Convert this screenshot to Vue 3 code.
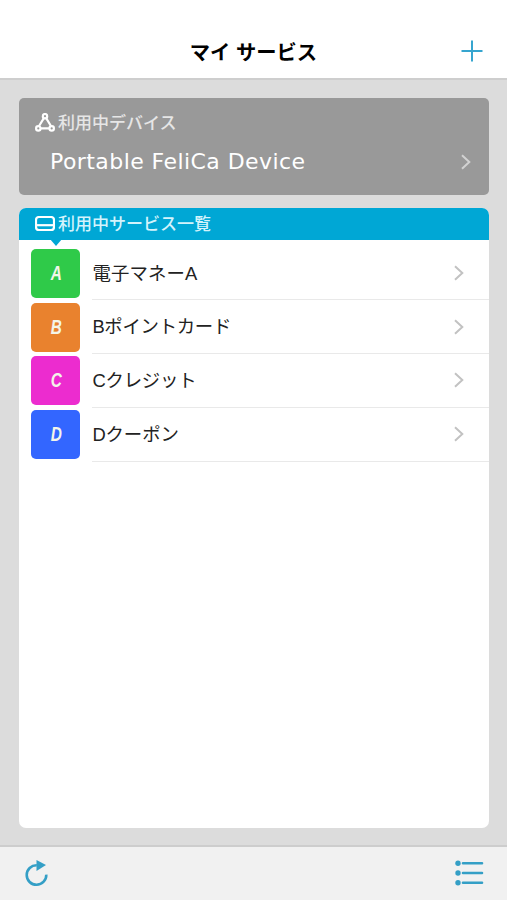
<script setup>
const services = [
  { letter: 'A', name: '電子マネーA', tone: 'green' },
  { letter: 'B', name: 'Bポイントカード', tone: 'orange' },
  { letter: 'C', name: 'Cクレジット', tone: 'pink' },
  { letter: 'D', name: 'Dクーポン', tone: 'blue' },
]
</script>

<template>
  <div class="screen">
    <header class="navbar">
      <h1>マイ サービス</h1>
      <button class="add" aria-label="追加">
        <svg width="22" height="22" viewBox="0 0 22 22"><path d="M11 .5v21M.5 11h21" /></svg>
      </button>
    </header>

    <main>
      <section class="device">
        <h2 class="caption">
          <svg width="20" height="20" viewBox="0 0 20 20">
            <path d="M8.7 5.4 4.2 12.8M11.3 5.4l4.5 7.4M6 15.4h8" />
            <circle cx="10" cy="3.2" r="2.2" />
            <circle cx="3.3" cy="15.4" r="2.2" />
            <circle cx="16.7" cy="15.4" r="2.2" />
          </svg>
          <span>利用中デバイス</span>
        </h2>
        <div class="device-row">
          <span class="device-name">Portable FeliCa Device</span>
          <svg class="chevron" width="10" height="16" viewBox="0 0 10 16"><path d="m1 1.3 7.3 6.7L1 14.7" /></svg>
        </div>
      </section>

      <section class="services">
        <h2 class="caption">
          <svg width="20" height="16" viewBox="0 0 20 16">
            <rect x="1" y="1" width="18" height="13" rx="3" />
            <path d="M1 9.2h18" />
          </svg>
          <span>利用中サービス一覧</span>
        </h2>
        <ul>
          <li v-for="s in services" :key="s.letter" :class="s.tone">
            <span class="tile"><b>{{ s.letter }}</b></span>
            <div class="entry">
              <span class="name">{{ s.name }}</span>
              <svg class="chevron" width="10" height="16" viewBox="0 0 10 16"><path d="m1 1.3 7.3 6.7L1 14.7" /></svg>
            </div>
          </li>
        </ul>
      </section>
    </main>

    <footer>
      <button aria-label="更新">
        <svg width="24" height="28" viewBox="0 0 24 28">
          <path class="arc" d="M21.3 15.6A9.8 9.8 0 1 1 11.8 6.2" />
          <path class="head" d="M11.5 1 21 6.1l-9.5 5.8z" />
        </svg>
      </button>
      <button aria-label="一覧">
        <svg width="29" height="26" viewBox="0 0 29 26">
          <circle class="head" cx="3" cy="3.2" r="2.7" />
          <circle class="head" cx="3" cy="13" r="2.7" />
          <circle class="head" cx="3" cy="22.8" r="2.7" />
          <path class="line" d="M8 3.2h19M8 13h19M8 22.8h19" />
        </svg>
      </button>
    </footer>
  </div>
</template>

<style>
body {
  margin: 0;
}
</style>

<style scoped>
.screen {
  display: flex;
  flex-direction: column;
  height: 900px;
  background: #dcdcdc;
  font-family: "Liberation Sans", "Noto Sans CJK JP", sans-serif;
  color: #222;
}
svg {
  display: block;
  flex: none;
  fill: none;
}
button {
  padding: 0;
  border: 0;
  background: none;
}
h1,
h2,
ul {
  margin: 0;
  padding: 0;
}
.navbar {
  box-sizing: border-box;
  display: grid;
  grid-template-columns: 1fr auto 1fr;
  align-items: center;
  height: 80px;
  padding: 24px 24px 0;
  border-bottom: 2px solid #cecece;
  background: #fff;
}
h1 {
  grid-column: 2;
  padding-top: 4px;
  font-size: 20.3px;
  line-height: 28px;
  color: #000;
}
.add {
  justify-self: end;
}
.add svg {
  stroke: #36a5cf;
  stroke-width: 2;
}
main {
  flex: 1;
  display: flex;
  flex-direction: column;
  gap: 12.5px;
  padding: 17.5px 18px 17px 19px;
}
.caption {
  display: flex;
  align-items: center;
  gap: 3px;
  font-size: 17px;
  line-height: 24px;
  font-weight: 500;
}
.caption span {
  padding-top: 2px;
}
.caption svg {
  stroke: #fff;
  stroke-width: 2.2;
}
.device {
  box-sizing: border-box;
  height: 97.5px;
  padding: 12px 18px 0 16px;
  border-radius: 5px;
  background: #999;
}
.device .caption {
  color: #e6e6e6;
}
.device-row {
  display: flex;
  align-items: center;
  justify-content: space-between;
  padding: 11px 0 0 15px;
}
.device-name {
  font: 22px/30px "DejaVu Sans", sans-serif;
  letter-spacing: 0.43px;
  color: #fff;
}
.chevron {
  stroke: #c2c2c2;
  stroke-width: 2;
}
.device .chevron {
  stroke: #d2d2d2;
}
.services {
  flex: 1;
  border-radius: 7px;
  background: #fff;
}
.services .caption {
  position: relative;
  height: 32px;
  padding-left: 16px;
  border-radius: 7px 7px 0 0;
  background: #00a7d5;
  color: #d3f3fc;
}
.services .caption::after {
  content: "";
  position: absolute;
  top: 31px;
  left: 31px;
  border: 6px solid transparent;
  border-top: 7px solid #00a7d5;
  border-bottom: 0;
}
ul {
  padding: 7px 0 0 12.4px;
  list-style: none;
}
li {
  display: flex;
  align-items: center;
  gap: 12px;
  height: 53.8px;
}
.tile {
  width: 49px;
  height: 49px;
  border-radius: 5px;
  font: italic bold 20px/49px "Liberation Sans", sans-serif;
  text-align: center;
  color: #f4f5e9;
}
.tile b {
  display: inline-block;
  transform: scaleX(0.77);
}
.green .tile { background: #2fca49; }
.orange .tile { background: #e9822e; }
.pink .tile { background: #ec2ccf; }
.blue .tile { background: #3366ff; }
.entry {
  flex: 1;
  box-sizing: border-box;
  display: flex;
  align-items: center;
  justify-content: space-between;
  height: 100%;
  padding-right: 25px;
  border-bottom: 1.5px solid #e9e9e9;
}
.name {
  padding-top: 1.5px;
  font-size: 18.4px;
  line-height: 28px;
}
.green .name { letter-spacing: 0.15px; }
.orange .name { letter-spacing: -0.3px; }
.pink .name { letter-spacing: -0.2px; }
.blue .name { letter-spacing: -0.1px; }
footer {
  box-sizing: border-box;
  display: flex;
  align-items: center;
  justify-content: space-between;
  height: 55px;
  padding: 0 23px 2px 25px;
  border-top: 2px solid #cdcdcd;
  background: #f1f1f1;
}
.arc,
.line {
  stroke: #349fc6;
  stroke-width: 2.6;
}
.line {
  stroke-linecap: round;
}
.head {
  fill: #349fc6;
}
</style>
